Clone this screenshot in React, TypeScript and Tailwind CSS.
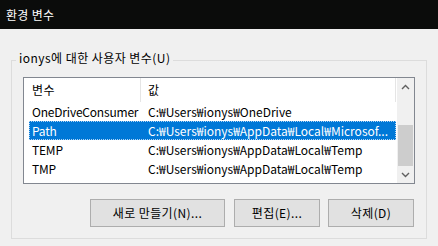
import React from "react";

const rows = [
  { name: "OneDriveConsumer", value: "C:₩Users₩ionys₩OneDrive" },
  { name: "Path", value: "C:₩Users₩ionys₩AppData₩Local₩Microsof...", selected: true },
  { name: "TEMP", value: "C:₩Users₩ionys₩AppData₩Local₩Temp" },
  { name: "TMP", value: "C:₩Users₩ionys₩AppData₩Local₩Temp" },
];

const Chevron = ({ down }: { down?: boolean }) => (
  <svg width="9" height="6" viewBox="0 0 9 6" className={down ? "rotate-180" : ""}>
    <path d="M1 5 L4.5 1.5 L8 5" fill="none" stroke="#606060" strokeWidth="1.4" />
  </svg>
);

export default function App() {
  return (
    <div className="w-[438px] h-[246px] overflow-hidden bg-[#f0f0f0] text-[12px] text-black font-['Noto_Sans_CJK_KR',sans-serif]">
      <div className="h-[29px] bg-[#0b0c0b] text-white flex items-center pl-[6px] leading-[16px] tracking-[0.3px]">
        환경 변수
      </div>

      <div className="relative ml-[11px] mt-[31px] w-[416px] h-[179px] border border-[#dcdcdc] px-[11px] pt-[16px]">
        <span className="absolute left-[4px] -top-[11px] bg-[#f0f0f0] px-[3px] leading-[16px] tracking-[0.45px]">
          ionys에 대한 사용자 변수(U)
        </span>

        <div className="w-[392px] h-[107px] border border-[#828790] bg-white flex">
          <div className="w-[373px] flex flex-col">
            <div className="h-[24px] flex items-center">
              <div className="w-[116px] pl-[8px] leading-[16px] tracking-[0.5px]">변수</div>
              <div className="w-px h-full bg-[#e5e5e5]" />
              <div className="flex-1 pl-[7px] leading-[16px]">값</div>
              <div className="w-px h-full bg-[#e5e5e5]" />
              <div className="w-px" />
            </div>
            {rows.map((r) => (
              <div
                key={r.name}
                className={
                  "ml-[5px] w-[367px] h-[19px] flex items-center leading-[16px] whitespace-nowrap " +
                  (r.selected
                    ? "bg-[#0078d7] text-white outline-1 outline-dotted outline-[#b0d4f5] -outline-offset-1"
                    : "")
                }
              >
                <div className="w-[112px] pl-[3px] overflow-hidden tracking-[-0.2px]">{r.name}</div>
                <div className="flex-1 pl-[7px] overflow-hidden">{r.value}</div>
              </div>
            ))}
          </div>

          <div className="w-[17px] flex flex-col bg-[#f0f0f0]">
            <div className="h-[17px] flex items-center justify-center">
              <Chevron />
            </div>
            <div className="flex-1 flex flex-col">
              <div className="mt-auto mx-px h-[41px] bg-[#cdcdcd]" />
            </div>
            <div className="h-[17px] flex items-center justify-center">
              <Chevron down />
            </div>
          </div>
        </div>

        <div className="mt-[15px] flex justify-end pr-px tracking-[0.4px]">
          <button className="w-[135px] h-[28px] border border-[#adadad] bg-[#e1e1e1] leading-[16px]">
            새로 만들기(N)...
          </button>
          <button className="ml-[9px] w-[86px] h-[28px] border border-[#adadad] bg-[#e1e1e1] leading-[16px]">
            편집(E)...
          </button>
          <button className="ml-[8px] w-[86px] h-[28px] border border-[#adadad] bg-[#e1e1e1] leading-[16px]">
            삭제(D)
          </button>
        </div>
      </div>
    </div>
  );
}
